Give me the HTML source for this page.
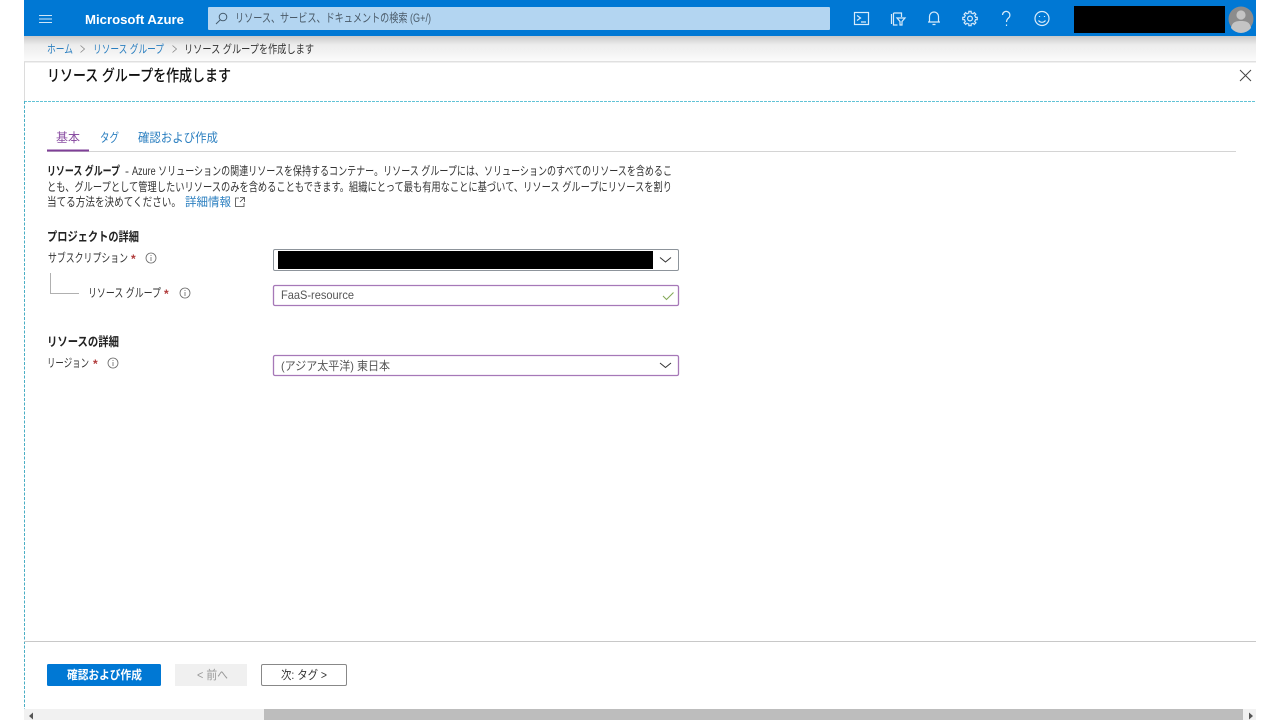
<!DOCTYPE html>
<html lang="ja"><head><meta charset="utf-8"><title>リソース グループを作成します</title>
<style>
html,body{margin:0;padding:0;background:#fff;width:1280px;height:720px;overflow:hidden}
svg{display:block}
text{font-family:"Liberation Sans","Noto Sans CJK JP",sans-serif;font-size:12px;fill:#333;white-space:pre}
.b{font-weight:700;fill:#222}
.l{fill:#2b7fc0}
.s{fill:#b03a3a}
.ic{fill:none;stroke:#d8ebfa;stroke-width:1.2}
.inf{fill:none;stroke:#666;stroke-width:.8}
</style></head><body>
<svg width="1280" height="720" viewBox="0 0 1280 720" xmlns="http://www.w3.org/2000/svg">
<defs><linearGradient id="sh" x1="0" y1="0" x2="0" y2="1"><stop offset="0" stop-color="#c9c9c9"/><stop offset=".35" stop-color="#ececec"/><stop offset="1" stop-color="#fbfbfb"/></linearGradient>
<path id="th" class="ic" d="M-2.14-5.17L-1.16-5.48L-1.14-7.21L1.14-7.21L1.16-5.48L2.14-5.17"/></defs>
<rect x="24" y="36" width="1232" height="25" fill="url(#sh)"/>
<rect x="24" y="0" width="1232" height="36" fill="#0078d4"/>
<path d="M39 15.5h13M39 19h13M39 22.5h13" stroke="#cfe6f8" stroke-width="1.1" fill="none"/>
<text x="85" y="24" textLength="99" lengthAdjust="spacingAndGlyphs" style="font-size:13px;font-weight:700;fill:#fff">Microsoft Azure</text>
<rect x="208" y="7" width="622" height="23" rx="1" fill="#b3d5f1"/>
<g fill="none" stroke="#44596b" stroke-width="1"><circle cx="223" cy="17" r="3.8"/><path d="M220.3 19.8L216 24"/></g>
<text x="235" y="22" textLength="196" lengthAdjust="spacingAndGlyphs" style="fill:#4a5a68">リソース、サービス、ドキュメントの検索 (G+/)</text>
<!-- top icons -->
<rect class="ic" x="854.5" y="12.5" width="14" height="12"/><path class="ic" d="M857 15.5l3.5 2.5-3.5 2.5M861 22h5"/>
<path class="ic" d="M891.5 14v10M893.5 13h8v4M893.5 13v12h4M897 18h8l-3 3.500v3.500h-2v-3.500z"/>
<path class="ic" d="M929.500 22v-5.500a4.500 4.500 0 0 1 9 0V22zM928 22h12M932.500 24.500h3"/>
<circle class="ic" cx="970" cy="18.500" r="2.400"/>
<g transform="translate(970 18.500)"><use href="#th"/><use href="#th" transform="rotate(45)"/><use href="#th" transform="rotate(90)"/><use href="#th" transform="rotate(135)"/><use href="#th" transform="rotate(180)"/><use href="#th" transform="rotate(225)"/><use href="#th" transform="rotate(270)"/><use href="#th" transform="rotate(315)"/></g>
<path class="ic" d="M1002.500 15a3.700 3.700 0 1 1 6 3c-1.500 1.300-2 2-2 4M1006.500 24.500v1.500"/>
<circle class="ic" cx="1042" cy="18.500" r="7"/><path class="ic" d="M1038.500 20.500c1.800 2.400 5.200 2.400 7 0M1039.500 16v1M1044.500 16v1"/>
<rect x="1074" y="6" width="151" height="27" fill="#000"/>
<circle cx="1241" cy="19" r="12.500" fill="#8c8c8c"/>
<circle cx="1241" cy="15" r="4.600" fill="#c4c4c4"/><path d="M1231 28c1-6 5-7 10-7s9 1 10 7a12.500 12.500 0 0 1-20 0z" fill="#c4c4c4"/>
<!-- breadcrumb -->
<text x="47" y="53" textLength="26" lengthAdjust="spacingAndGlyphs" class="l" style="font-size:11.500px">ホーム</text>
<path d="M80.500 45.500l4 3.500-4 3.500M172.500 45.500l4 3.500-4 3.500" fill="none" stroke="#888" stroke-width=".8"/>
<text x="93" y="53" textLength="71" lengthAdjust="spacingAndGlyphs" class="l" style="font-size:11.500px">リソース グループ</text>
<text x="184" y="53" textLength="130" lengthAdjust="spacingAndGlyphs" style="font-size:11.500px">リソース グループを作成します</text>
<!-- panel -->
<rect x="24" y="61" width="1232" height="1.500" fill="#e0e0e0"/>
<rect x="24" y="62" width="1" height="40" fill="#dcdcdc"/>
<text x="47" y="81" textLength="184" lengthAdjust="spacingAndGlyphs" style="font-size:16px;fill:#111;font-weight:500">リソース グループを作成します</text>
<path d="M1240 70l11 11M1251 70l-11 11" stroke="#444" stroke-width="1"/>
<path d="M24 101.500H1256" stroke="#62c3d6" stroke-width="1" stroke-dasharray="3 1"/>
<path d="M24.500 101V710" stroke="#4aaec4" stroke-width="1" stroke-dasharray="3 1.500"/>
<!-- tabs -->
<text x="56" y="142" textLength="24" lengthAdjust="spacingAndGlyphs" style="font-size:12.500px;fill:#8b4fa3">基本</text>
<text x="100" y="142" textLength="19" lengthAdjust="spacingAndGlyphs" class="l" style="font-size:12.500px">タグ</text>
<text x="138" y="142" textLength="80" lengthAdjust="spacingAndGlyphs" class="l" style="font-size:12.500px">確認および作成</text>
<rect x="47" y="151" width="1189" height="1" fill="#d4d4d4"/>
<rect x="47" y="149.500" width="42" height="2" fill="#7f3f98"/>
<!-- description -->
<text x="47" y="175" textLength="73" lengthAdjust="spacingAndGlyphs" class="b">リソース グループ</text>
<text x="125" y="175">-</text>
<text x="132" y="175" textLength="540" lengthAdjust="spacingAndGlyphs">Azure ソリューションの関連リソースを保持するコンテナー。リソース グループには、ソリューションのすべてのリソースを含めるこ</text>
<text x="47" y="191" textLength="625" lengthAdjust="spacingAndGlyphs">とも、グループとして管理したいリソースのみを含めることもできます。組織にとって最も有用なことに基づいて、リソース グループにリソースを割り</text>
<text x="47" y="206" textLength="134" lengthAdjust="spacingAndGlyphs">当てる方法を決めてください。</text>
<text x="185" y="206" textLength="46" lengthAdjust="spacingAndGlyphs" class="l">詳細情報</text>
<path d="M239 198h-3.500v8.500h8.500V203M240 197.500h4.500v4.500M244.500 197.500l-4.500 4.500" fill="none" stroke="#444" stroke-width=".8"/>
<!-- section 1 -->
<text x="47" y="241" textLength="92" lengthAdjust="spacingAndGlyphs" class="b" style="font-size:12.500px">プロジェクトの詳細</text>
<text x="48" y="262" textLength="80" lengthAdjust="spacingAndGlyphs">サブスクリプション</text>
<text x="131" y="263" class="s" style="font-size:12px;font-weight:700">*</text>
<circle class="inf" cx="151" cy="258" r="5"/><path class="inf" d="M151 257v4M151 255v1"/>
<path d="M50.500 273v20.500H79" fill="none" stroke="#b0b0b0" stroke-width="1"/>
<text x="88" y="297" textLength="73" lengthAdjust="spacingAndGlyphs">リソース グループ</text>
<text x="164" y="298" class="s" style="font-size:12px;font-weight:700">*</text>
<circle class="inf" cx="185" cy="293" r="5"/><path class="inf" d="M185 292v4M185 290v1"/>
<rect x="273.500" y="249.500" width="405" height="21" rx="1.500" fill="#fff" stroke="#8d949b"/>
<rect x="278" y="251" width="375" height="18" fill="#000"/>
<path d="M660 257.500l5.500 4.500 5.500-4.500" fill="none" stroke="#333" stroke-width="1"/>
<rect x="273.500" y="285.500" width="405" height="20" rx="1.500" fill="#fff" stroke="#a678b8" stroke-width="1.300"/>
<text x="281" y="299" textLength="73" lengthAdjust="spacingAndGlyphs" style="fill:#555">FaaS-resource</text>
<path d="M663 296l3.500 3.500 7-7" fill="none" stroke="#86a95a" stroke-width="1.100"/>
<!-- section 2 -->
<text x="47" y="346" textLength="72" lengthAdjust="spacingAndGlyphs" class="b" style="font-size:12.500px">リソースの詳細</text>
<text x="47" y="367" textLength="42" lengthAdjust="spacingAndGlyphs">リージョン</text>
<text x="93" y="368" class="s" style="font-size:12px;font-weight:700">*</text>
<circle class="inf" cx="113" cy="363" r="5"/><path class="inf" d="M113 362v4M113 360v1"/>
<rect x="273.500" y="355.500" width="405" height="20" rx="1.500" fill="#fff" stroke="#a678b8" stroke-width="1.300"/>
<text x="281" y="370" textLength="109" lengthAdjust="spacingAndGlyphs" style="fill:#555">(アジア太平洋) 東日本</text>
<path d="M660 363l5.500 4.500 5.500-4.500" fill="none" stroke="#333" stroke-width="1"/>
<!-- footer -->
<rect x="24" y="641" width="1232" height="1" fill="#c8c8c8"/>
<rect x="47" y="664" width="114" height="22" rx="1.500" fill="#0078d4"/>
<text x="67" y="679" textLength="75" lengthAdjust="spacingAndGlyphs" style="font-weight:700;fill:#fff">確認および作成</text>
<rect x="175" y="664" width="72" height="22" fill="#f0f0f0"/>
<text x="197" y="679" textLength="31" lengthAdjust="spacingAndGlyphs" style="fill:#999">&lt; 前へ</text>
<rect x="261.500" y="664.500" width="85" height="21" rx="1.500" fill="#fff" stroke="#888"/>
<text x="281" y="679" textLength="46" lengthAdjust="spacingAndGlyphs">次: タグ &gt;</text>
<!-- scrollbar -->
<rect x="24" y="709" width="1232" height="11" fill="#f1f1f1"/>
<rect x="264" y="709" width="979" height="11" fill="#bdbdbd"/>
<path d="M29 716l4-3.500v7zM1253 716l-4-3.500v7z" fill="#555"/>
</svg>
</body></html>
